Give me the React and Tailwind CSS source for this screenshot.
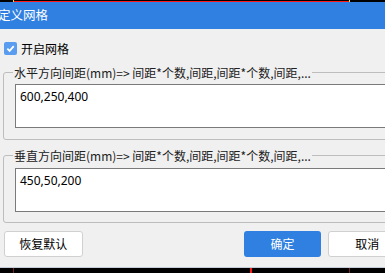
export default function App() {
  const cjk = { fontFamily: '"Noto Sans CJK SC", "Noto Sans", sans-serif' };

  return (
    <div className="w-[385px] h-[273px] overflow-hidden bg-black relative" style={cjk}>

      {/* top strip of the window behind */}
      <div className="h-[2px] flex">
        <div className="w-[13px] bg-black" />
        <div className="w-[1px] bg-yellow-300" />
        <div className="w-[335px] border-t border-black bg-[#ff1a1a]" />
        <div className="w-[1px] bg-yellow-300" />
        <div className="flex-1 bg-black" />
      </div>

      {/* title bar */}
      <div className="h-[27px] bg-[#2f80e0] flex items-center">
        <span className="text-[12.5px] text-white ml-[-2px] leading-none">定义网格</span>
      </div>

      {/* body */}
      <div className="w-[420px] h-[238px] bg-[#f0f0f0] pl-[3px] pr-[14px] pt-[13px]">

        <label className="flex items-center h-[13px] ml-[1px]">
          <span className="w-[13px] h-[13px] rounded-[2px] bg-[#5a9cf0] flex items-center justify-center">
            <svg width="9" height="9" viewBox="0 0 10 10">
              <path d="M1.5 5.2 L4 7.6 L8.6 2.4" fill="none" stroke="white" strokeWidth="2" />
            </svg>
          </span>
          <span className="ml-[4px] text-[12px] text-black leading-none">开启网格</span>
        </label>

        {/* horizontal spacing */}
        <fieldset className="mt-[10px] border border-[#bdbdbd] rounded-[3px] pl-[11px] pb-[10px] h-[75px]">
          <legend className="ml-[-2px] px-[1px] text-[12px] leading-[15px] text-[#202020]">
            水平方向间距(mm)=&gt; 间距*个数,间距,间距*个数,间距,...
          </legend>
          <div className="mt-[4px] h-[44px] border border-[#7a7a7a] bg-white px-[4px] pt-[4px] text-[12px] leading-[16px] text-black" style={{ fontFamily: '"Noto Sans", sans-serif' }}>
            600,250,400
          </div>
        </fieldset>

        {/* vertical spacing */}
        <fieldset className="mt-[8px] border border-[#bdbdbd] rounded-[3px] pl-[11px] pb-[10px] h-[75px]">
          <legend className="ml-[-2px] px-[1px] text-[12px] leading-[15px] text-[#202020]">
            垂直方向间距(mm)=&gt; 间距*个数,间距,间距*个数,间距,...
          </legend>
          <div className="mt-[5px] h-[44px] border border-[#7a7a7a] bg-white px-[4px] pt-[4px] text-[12px] leading-[16px] text-black" style={{ fontFamily: '"Noto Sans", sans-serif' }}>
            450,50,200
          </div>
        </fieldset>

        {/* buttons */}
        <div className="mt-[8px] flex items-center h-[26px]">
          <button className="w-[79px] h-[26px] ml-[1px] bg-white border border-[#d0d0d0] rounded-[3px] text-[12px] text-black">
            恢复默认
          </button>
          <button className="w-[78px] h-[26px] ml-[161px] bg-[#2f80e0] rounded-[3px] text-[12px] text-white">
            确定
          </button>
          <button className="w-[78px] h-[26px] ml-[7px] bg-white border border-[#d0d0d0] rounded-[3px] text-[12px] text-black">
            取消
          </button>
        </div>
      </div>

      {/* window frame line and backdrop below */}
      <div className="h-[1px] bg-[#c4ccd8]" />
      <div className="h-[5px] flex">
        <div className="w-[13px]" />
        <div className="w-[1px] bg-[#7a2020]" />
        <div className="w-[236px]" />
        <div className="w-[2px] bg-[#ff1a1a]" />
        <div className="w-[97px]" />
        <div className="w-[1px] bg-[#7a2020]" />
      </div>
    </div>
  );
}
